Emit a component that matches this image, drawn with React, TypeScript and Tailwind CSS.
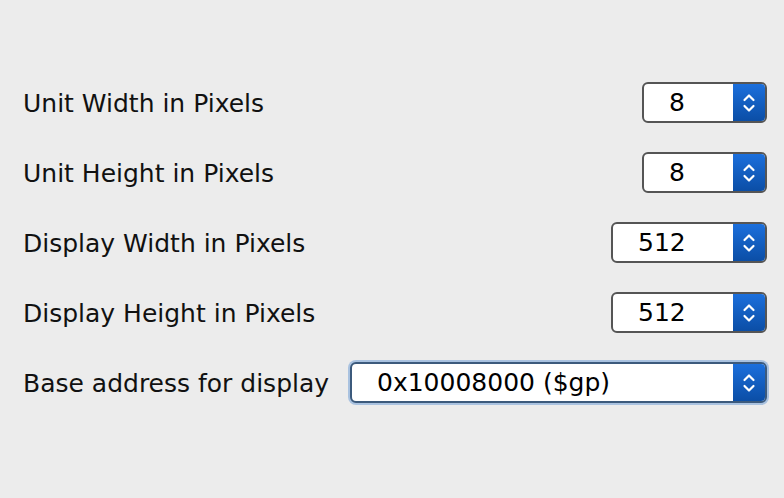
const rows = [
  { label: 'Unit Width in Pixels', value: '8', width: 'w-[125px]' },
  { label: 'Unit Height in Pixels', value: '8', width: 'w-[125px]' },
  { label: 'Display Width in Pixels', value: '512', width: 'w-[156px]' },
  { label: 'Display Height in Pixels', value: '512', width: 'w-[156px]' },
]

function Arrows() {
  return (
    <svg width="14" height="26" viewBox="0 0 14 26" fill="none" stroke="white" strokeWidth="2.2" strokeLinecap="round" strokeLinejoin="round">
      <path d="M2.5 10 L7 5.5 L11.5 10" />
      <path d="M2.5 16 L7 20.5 L11.5 16" />
    </svg>
  )
}

function Select({ value, width, focused }: { value: string; width: string; focused?: boolean }) {
  return (
    <div
      className={`${width} h-[41px] flex rounded-[6px] overflow-hidden border-2 ${
        focused ? 'border-[#3c5a7c] shadow-[0_0_0_2px_#a9c2e0]' : 'border-[#555555]'
      } bg-white`}
    >
      <div className="flex-1 flex items-center pl-[25px] text-[25px] text-black leading-none">{value}</div>
      <div className="w-[32px] flex items-center justify-center bg-gradient-to-b from-[#1b6fdc] to-[#0b4ea6]">
        <Arrows />
      </div>
    </div>
  )
}

export default function App() {
  return (
    <div
      className="w-[784px] h-[498px] bg-[#ececec] pt-[82px] pl-[23px] pr-[17px] flex flex-col gap-[29px]"
      style={{ fontFamily: '"DejaVu Sans", sans-serif' }}
    >
      {rows.map((r) => (
        <div key={r.label} className="flex items-center justify-between h-[41px]">
          <span className="text-[25px] text-[#111] pt-[2px]">{r.label}</span>
          <Select value={r.value} width={r.width} />
        </div>
      ))}
      <div className="flex items-center justify-between h-[41px]">
        <span className="text-[25px] text-[#111] pt-[2px]">Base address for display</span>
        <Select value="0x10008000 ($gp)" width="w-[417px]" focused />
      </div>
    </div>
  )
}
